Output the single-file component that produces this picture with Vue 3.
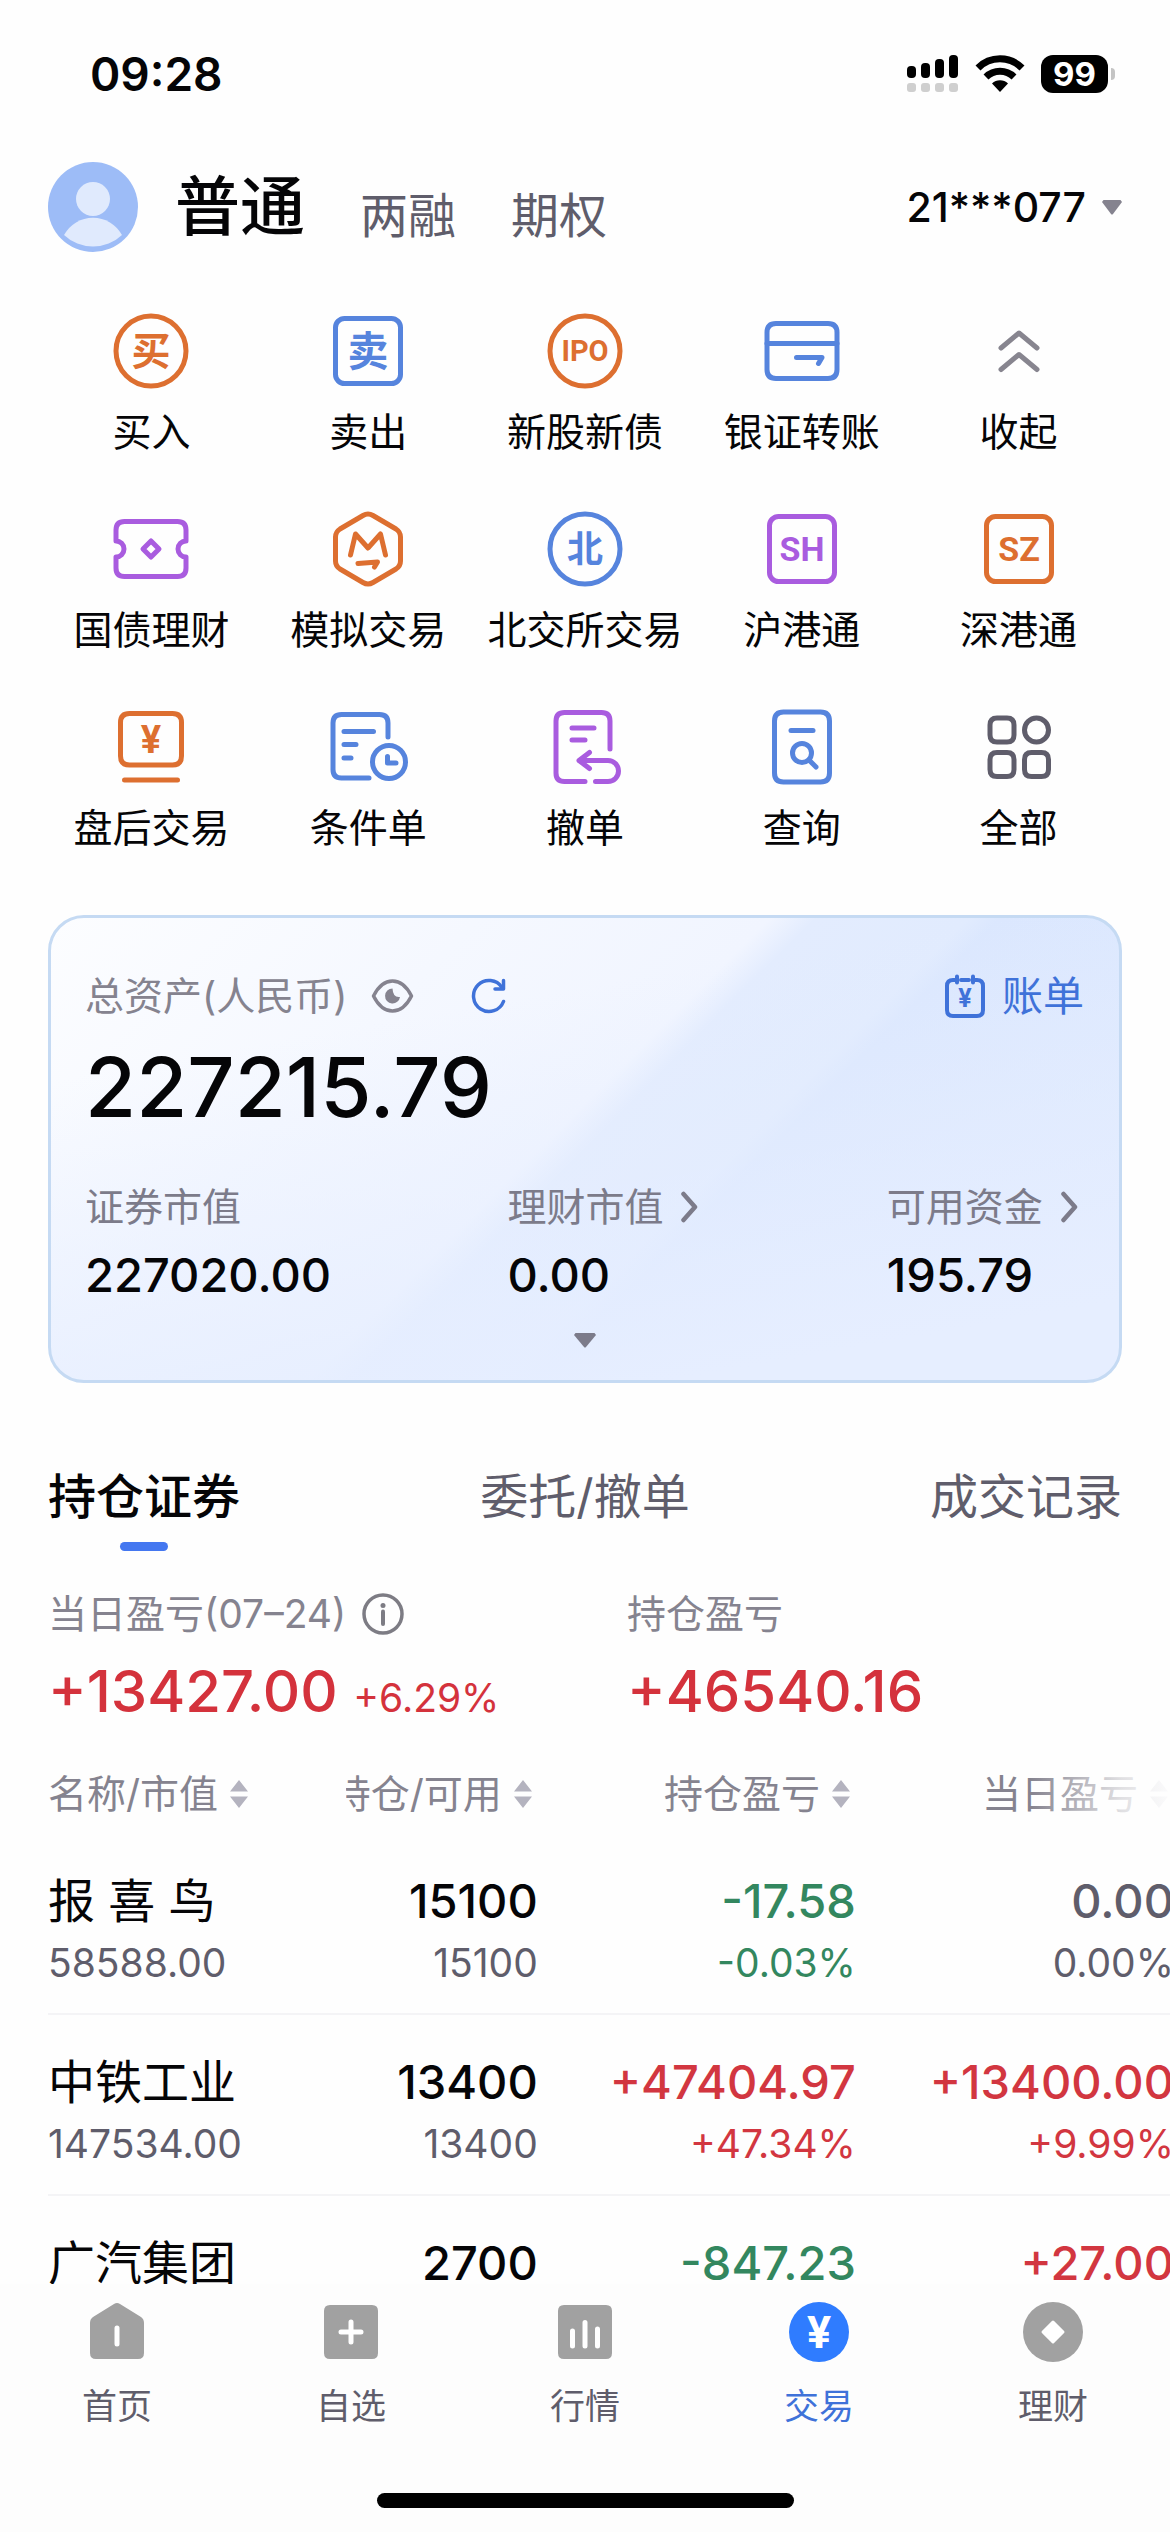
<template>
  <div class="page">
    <div class="status-bar">
      <span class="clock">09:28</span>
      <div class="status-icons">
        <svg width="52" height="38" viewBox="0 0 52 38">
          <g fill="#000">
            <rect x="0" y="11" width="9" height="12" rx="4" />
            <rect x="14" y="8" width="9" height="15" rx="4" />
            <rect x="28" y="4" width="9" height="19" rx="4" />
            <rect x="42" y="0" width="9" height="23" rx="4" />
          </g>
          <g fill="#cfcfcf">
            <rect x="0" y="28" width="9" height="9" rx="3" />
            <rect x="14" y="28" width="9" height="9" rx="3" />
            <rect x="28" y="28" width="9" height="9" rx="3" />
            <rect x="42" y="28" width="9" height="9" rx="3" />
          </g>
        </svg>
        <svg width="50" height="38" viewBox="0 0 50 38">
          <path d="M3 13 a31 31 0 0 1 44 0" fill="none" stroke="#000" stroke-width="7" />
          <path d="M11 22 a20 20 0 0 1 28 0" fill="none" stroke="#000" stroke-width="7" />
          <path d="M25 37 L17 28.500 a11.500 11.500 0 0 1 16 0 Z" fill="#000" />
        </svg>
        <div class="battery">
          <span class="battery-level">99</span>
          <span class="battery-cap"></span>
        </div>
      </div>
    </div>

    <header class="account-bar">
      <svg class="avatar" viewBox="0 0 90 90">
        <circle cx="45" cy="45" r="45" fill="#9dbcf7" />
        <circle cx="45" cy="37" r="17" fill="#e0eafd" />
        <path d="M16 73 a33 33 0 0 1 58 0 a42 42 0 0 1 -58 0 Z" fill="#e0eafd" />
      </svg>
      <nav class="account-tabs">
        <button
          v-for="item in accountTabs"
          :key="item"
          class="account-tab"
          :class="{ active: item === accountTab }"
          @click="accountTab = item"
        >{{ item }}</button>
      </nav>
      <button class="account-picker">
        21***077
        <svg width="20" height="15" viewBox="0 0 20 15"><path d="M1.500 0 H18.500 L20 2 L11 14 Q10 15 9 14 L0 2 Z" fill="#85838f" /></svg>
      </button>
    </header>

    <section class="menu">
      <a v-for="item in menu" :key="item.label" href="#" class="menu-item">
        <svg class="menu-icon" :class="item.color" viewBox="0 0 90 90">
          <circle v-if="item.frame === 'circle'" cx="45" cy="45" r="35" />
          <rect v-if="item.frame === 'square'" x="12.500" y="12.500" width="65" height="65" rx="9" />
          <path v-for="d in item.paths" :key="d" :d="d" />
          <text v-if="item.text" x="45" :y="item.textY" :font-size="item.textSize">{{ item.text }}</text>
        </svg>
        <span>{{ item.label }}</span>
      </a>
    </section>

    <section class="assets">
      <div class="assets-head">
        <span>总资产(人民币)</span>
        <button class="icon-button eye" aria-label="隐藏金额">
          <svg width="43" height="36" viewBox="0 0 43 36">
            <path d="M2.500 18 Q10 3 21.500 3 Q33 3 40.500 18 Q33 33 21.500 33 Q10 33 2.500 18 Z" fill="none" stroke="#85838f" stroke-width="3.500" stroke-linejoin="round" />
            <path d="M21.500 10.500 a7.500 7.500 0 1 0 7.500 8.500 q-7 1 -7.500 -8.500 Z" fill="#85838f" />
          </svg>
        </button>
        <button class="icon-button refresh" aria-label="刷新">
          <svg width="36" height="36" viewBox="0 0 36 36" fill="none" stroke="#3f72d9" stroke-width="3.500" stroke-linecap="round" stroke-linejoin="round">
            <path d="M33.500 23.500 A15.500 15.500 0 1 1 32 9.500" />
            <path d="M33.500 2.500 V11 H25" />
          </svg>
        </button>
        <a href="#" class="bill">
          <svg width="42" height="45" viewBox="0 0 42 45" fill="none" stroke="#3f72d9" stroke-width="4" stroke-linecap="round">
            <path d="M12 6 H9 Q3 6 3 12 V36 Q3 42 9 42 H33 Q39 42 39 36 V12 Q39 6 33 6 H30 M17 6 H25 M13 2.500 V8.500 M29 2.500 V8.500" />
            <text class="yen" x="21" y="33" font-size="25" fill="#3f72d9" stroke="none">¥</text>
          </svg>
          账单
        </a>
      </div>
      <div class="assets-total">227215.79</div>
      <div class="assets-parts">
        <div v-for="part in assetParts" :key="part.label">
          <div class="part-label">
            {{ part.label }}
            <svg v-if="part.link" width="17" height="32" viewBox="0 0 17 32"><path d="M2.500 3 L14 16 L2.500 29" fill="none" stroke="#7c7b8a" stroke-width="4.500" stroke-linecap="round" stroke-linejoin="round" /></svg>
          </div>
          <div class="part-value">{{ part.value }}</div>
        </div>
      </div>
      <button class="icon-button expand" aria-label="展开">
        <svg width="22" height="15" viewBox="0 0 22 15"><path d="M1.500 0 H20.500 L22 2 L12 14 Q11 15 10 14 L0 2 Z" fill="#7c7b8a" /></svg>
      </button>
    </section>

    <nav class="record-tabs">
      <button
        v-for="item in recordTabs"
        :key="item"
        class="record-tab"
        :class="{ active: item === recordTab }"
        @click="recordTab = item"
      >{{ item }}</button>
    </nav>

    <section class="profit">
      <div>
        <div class="profit-label">
          当日盈亏(07–24)
          <svg width="42" height="42" viewBox="0 0 42 42">
            <circle cx="21" cy="21" r="19" fill="none" stroke="#7d7c84" stroke-width="3.500" />
            <circle cx="21" cy="12.500" r="2.500" fill="#7d7c84" />
            <path d="M21 18.500 V31" stroke="#7d7c84" stroke-width="4" stroke-linecap="round" />
          </svg>
        </div>
        <div class="profit-value">+13427.00 <small>+6.29%</small></div>
      </div>
      <div>
        <div class="profit-label">持仓盈亏</div>
        <div class="profit-value">+46540.16</div>
      </div>
    </section>

    <section class="positions">
      <table>
        <colgroup>
          <col class="col-name" />
          <col class="col-hold" />
          <col />
          <col />
        </colgroup>
        <thead>
          <tr>
            <th v-for="col in columns" :key="col">
              <div class="sort">
                {{ col }}
                <svg width="18" height="30" viewBox="0 0 18 30"><path d="M9 1 L18 12.500 H0 Z M9 29 L18 17.500 H0 Z" fill="#b4b3bf" /></svg>
              </div>
            </th>
          </tr>
        </thead>
        <tbody>
          <tr v-for="row in positions" :key="row.name">
            <td>
              <div class="name">{{ row.name }}</div>
              <div class="sub">{{ row.value }}</div>
            </td>
            <td>
              <div class="main">{{ row.hold }}</div>
              <div class="sub">{{ row.usable }}</div>
            </td>
            <td :class="trend(row.profit)">
              <div class="main">{{ row.profit }}</div>
              <div class="sub">{{ row.profitRate }}</div>
            </td>
            <td :class="trend(row.today)">
              <div class="main">{{ row.today }}</div>
              <div class="sub">{{ row.todayRate }}</div>
            </td>
          </tr>
        </tbody>
      </table>
      <div class="fade"></div>
    </section>

    <footer class="tab-bar">
      <nav class="tab-list">
        <a v-for="tab in tabs" :key="tab.label" href="#" class="tab" :class="{ active: tab.active }">
          <svg width="60" height="60" viewBox="0 0 60 60">
            <path :d="tab.shape" fill="currentColor" />
            <path v-if="tab.line" :d="tab.line" fill="none" stroke="#fff" :stroke-width="tab.lineWidth" stroke-linecap="round" />
            <path v-if="tab.hole" :d="tab.hole" fill="#fff" stroke="#fff" stroke-width="3" stroke-linejoin="round" />
            <text v-if="tab.text" class="yen" x="30" y="46" font-size="45" fill="#fff">{{ tab.text }}</text>
          </svg>
          <span>{{ tab.label }}</span>
        </a>
      </nav>
      <div class="home-indicator"></div>
    </footer>
  </div>
</template>

<script setup>
import { ref } from 'vue';

const accountTabs = ['普通', '两融', '期权'];
const accountTab = ref('普通');

const recordTabs = ['持仓证券', '委托/撤单', '成交记录'];
const recordTab = ref('持仓证券');

const menu = [
  { label: '买入', color: 'orange', frame: 'circle', text: '买', textY: 59, textSize: 39 },
  { label: '卖出', color: 'blue', frame: 'square', text: '卖', textY: 60, textSize: 41 },
  { label: '新股新债', color: 'orange', frame: 'circle', text: 'IPO', textY: 55, textSize: 29 },
  {
    label: '银证转账',
    color: 'blue',
    paths: [
      'M19 17.5 H71 Q80 17.5 80 26.500 V63.500 Q80 72.500 71 72.500 H19 Q10 72.500 10 63.500 V26.500 Q10 17.500 19 17.500 Z',
      'M10 37.500 H80',
      'M39.500 51.500 H65 L61.500 57.500'
    ]
  },
  { label: '收起', color: 'gray', paths: ['M27 42 L45 27 L63 42', 'M27 63.500 L45 48.500 L63 63.500'] },
  {
    label: '国债理财',
    color: 'purple',
    paths: [
      'M10 37 V26 Q10 17.500 18.500 17.500 H71.500 Q80 17.500 80 26 V37 A8 8 0 0 0 80 53 V64 Q80 72.500 71.500 72.500 H18.500 Q10 72.500 10 64 V53 A8 8 0 0 0 10 37 Z',
      'M45 37 L53 45 L45 53 L37 45 Z'
    ]
  },
  {
    label: '模拟交易',
    color: 'orange',
    paths: [
      'M40 11.500 Q45 8.500 50 11.500 L73 25 Q77.500 28 77.500 33 V57 Q77.500 62 73 65 L50 78.500 Q45 81.500 40 78.500 L17 65 Q12.500 62 12.500 57 V33 Q12.500 28 17 25 Z',
      'M27.500 51 L32.500 30 L45 44 L57.500 30 L62.500 51',
      'M35 59.500 L54.500 58 L51.500 63'
    ]
  },
  { label: '北交所交易', color: 'blue', frame: 'circle', text: '北', textY: 58, textSize: 36 },
  { label: '沪港通', color: 'purple', frame: 'square', text: 'SH', textY: 57, textSize: 34 },
  { label: '深港通', color: 'orange', frame: 'square', text: 'SZ', textY: 57, textSize: 34 },
  {
    label: '盘后交易',
    color: 'orange',
    text: '¥',
    textY: 51,
    textSize: 38,
    paths: [
      'M23.500 11.500 H66.500 Q75.500 11.500 75.500 20.500 V54 Q75.500 63 66.500 63 H23.500 Q14.500 63 14.500 54 V20.500 Q14.500 11.500 23.500 11.500 Z',
      'M18.500 78 H71.500'
    ]
  },
  {
    label: '条件单',
    color: 'blue',
    paths: [
      'M65 35 V21 Q65 12.500 56.500 12.500 H18.500 Q10 12.500 10 21 V67.500 Q10 76 18.500 76 H46',
      'M21 29.500 H50.500 M21 42.500 H33 M21 56 H28',
      'M82.500 60 a16.500 16.500 0 1 1 -33 0 a16.500 16.500 0 1 1 33 0 Z',
      'M64.500 54.500 V61 H73'
    ]
  },
  {
    label: '撤单',
    color: 'purple',
    paths: [
      'M70 47 V19 Q70 10.500 61.500 10.500 H24.500 Q16 10.500 16 19 V71 Q16 79.500 24.500 79.500 H45',
      'M32 26 H54 M32 38 H45',
      'M49.500 50.500 L39 58.500 L49.500 66.500 M39 58.500 H68 A10.500 10.500 0 0 1 68 79.500 H55.500'
    ]
  },
  {
    label: '查询',
    color: 'blue',
    paths: [
      'M26.500 10 H63.500 Q72.500 10 72.500 19 V71 Q72.500 80 63.500 80 H26.500 Q17.500 80 17.500 71 V19 Q17.500 10 26.500 10 Z',
      'M34 28.500 H56',
      'M54.500 51 a9.500 9.500 0 1 1 -19 0 a9.500 9.500 0 1 1 19 0 Z',
      'M52 58 L59 65'
    ]
  },
  {
    label: '全部',
    color: 'dark',
    paths: [
      'M23 16 H33 Q40 16 40 23 V33 Q40 40 33 40 H23 Q16 40 16 33 V23 Q16 16 23 16 Z',
      'M74.500 28 a12 12 0 1 1 -24 0 a12 12 0 1 1 24 0 Z',
      'M23 50.500 H33 Q40 50.500 40 57.500 V67.500 Q40 74.500 33 74.500 H23 Q16 74.500 16 67.500 V57.500 Q16 50.500 23 50.500 Z',
      'M57.500 50.500 H67.500 Q74.500 50.500 74.500 57.500 V67.500 Q74.500 74.500 67.500 74.500 H57.500 Q50.500 74.500 50.500 67.500 V57.500 Q50.500 50.500 57.500 50.500 Z'
    ]
  }
];

const assetParts = [
  { label: '证券市值', value: '227020.00' },
  { label: '理财市值', value: '0.00', link: true },
  { label: '可用资金', value: '195.79', link: true }
];

const columns = ['名称/市值', '持仓/可用', '持仓盈亏', '当日盈亏'];

const positions = [
  { name: '报 喜 鸟', value: '58588.00', hold: '15100', usable: '15100', profit: '-17.58', profitRate: '-0.03%', today: '0.00', todayRate: '0.00%' },
  { name: '中铁工业', value: '147534.00', hold: '13400', usable: '13400', profit: '+47404.97', profitRate: '+47.34%', today: '+13400.00', todayRate: '+9.99%' },
  { name: '广汽集团', hold: '2700', profit: '-847.23', today: '+27.00' }
];

const square = 'M9 3 H51 Q57 3 57 9 V51 Q57 57 51 57 H9 Q3 57 3 51 V9 Q3 3 9 3 Z';
const round = 'M60 30 a30 30 0 1 1 -60 0 a30 30 0 1 1 60 0 Z';

const tabs = [
  {
    label: '首页',
    shape: 'M27 2 Q30 0 33 2 L54 15 Q57 17 57 21 V51 Q57 57 51 57 H9 Q3 57 3 51 V21 Q3 17 6 15 Z',
    line: 'M30 26 V42',
    lineWidth: 5
  },
  { label: '自选', shape: square, line: 'M30 20 V40 M20 30 H40', lineWidth: 5 },
  { label: '行情', shape: square, line: 'M17.500 29 V44 M30 20.500 V44 M42.500 27 V44', lineWidth: 5 },
  { label: '交易', shape: round, text: '¥', active: true },
  { label: '理财', shape: round, hole: 'M30 20 L40 30 L30 40 L20 30 Z' }
];

const trend = (value) => {
  if (value.startsWith('+')) return 'up';
  if (value.startsWith('-')) return 'down';
  return 'flat';
};
</script>

<style>
body {
  background: #fefefe;
}
</style>

<style scoped>
.page {
  display: flex;
  flex-direction: column;
  height: 100vh;
  overflow: hidden;
  background: #fefefe;
  color: #050507;
  font-family: Inter, "Noto Sans CJK SC", sans-serif;
  font-size: 39px;
  line-height: 48px;
}
button {
  padding: 0;
  border: none;
  background: none;
  color: inherit;
  font: inherit;
  cursor: pointer;
}
a {
  color: inherit;
  text-decoration: none;
}
svg {
  display: block;
  flex: none;
}

/* status bar */
.status-bar {
  display: flex;
  flex: none;
  justify-content: space-between;
  align-items: center;
  height: 148px;
  padding: 0 55px 0 90px;
}
.clock {
  font-size: 46px;
  font-weight: 600;
}
.status-icons {
  display: flex;
  align-items: center;
  gap: 16px;
}
.battery {
  display: flex;
  align-items: center;
  gap: 3px;
}
.battery-level {
  width: 67px;
  border-radius: 12px;
  background: #000;
  color: #fff;
  font-size: 33px;
  font-weight: 700;
  line-height: 38px;
  text-align: center;
}
.battery-cap {
  width: 4px;
  height: 12px;
  border-radius: 0 4px 4px 0;
  background: #c4c4c4;
}

/* account */
.account-bar {
  display: flex;
  flex: none;
  align-items: center;
  padding: 14px 48px 0;
}
.avatar {
  width: 90px;
  height: 90px;
  margin-right: 37px;
}
.account-tabs {
  display: flex;
  flex: 1;
  align-items: flex-end;
  gap: 55px;
}
.account-tab {
  color: #5f5d6b;
  font-size: 48px;
  line-height: 54px;
}
.account-tab.active {
  color: #050507;
  font-size: 65px;
  font-weight: 500;
  line-height: 72px;
}
.account-picker {
  display: flex;
  align-items: center;
  gap: 16px;
  font-size: 41px;
  font-weight: 500;
}

/* menu */
.menu {
  display: grid;
  flex: none;
  grid-template-columns: repeat(5, 1fr);
  row-gap: 48px;
  padding: 54px 43px 0;
}
.menu-item {
  display: flex;
  flex-direction: column;
  align-items: center;
  gap: 12px;
  white-space: nowrap;
}
.menu-icon {
  width: 90px;
  height: 90px;
  fill: none;
  stroke: currentColor;
  stroke-width: 5;
  stroke-linecap: round;
  stroke-linejoin: round;
}
.menu-icon text {
  fill: currentColor;
  stroke: none;
  font-family: Roboto, "Noto Sans CJK SC", sans-serif;
  font-weight: 700;
  text-anchor: middle;
}
.orange {
  color: #dd6f30;
}
.blue {
  color: #5684dd;
}
.purple {
  color: #a95cdf;
}
.gray {
  color: #87858f;
}
.dark {
  color: #5f5d6b;
}
.yen {
  font-family: Roboto, sans-serif;
  font-weight: 700;
  text-anchor: middle;
}

/* assets card */
.assets {
  display: flex;
  flex: none;
  flex-direction: column;
  margin: 63px 48px 0;
  padding: 54px 35px 32px 34px;
  border: 3px solid #c5daf3;
  border-radius: 36px;
  background:
    linear-gradient(350deg, #e6eeff 12%, rgba(230, 238, 255, 0) 75%),
    linear-gradient(135deg, #fcfdff 0%, #f5f8ff 28%, #f1f5ff 47%, #e3ecfe 50%, #e1ebfe 60%, #dbe7fe 62%, #dfeaff 100%);
}
.assets-head {
  display: flex;
  align-items: center;
  color: #85838f;
}
.icon-button {
  display: flex;
}
.eye {
  margin-left: 24px;
}
.refresh {
  margin-left: 56px;
}
.bill {
  display: flex;
  align-items: center;
  gap: 16px;
  margin-left: auto;
  color: #3f72d9;
  font-size: 41px;
}
.assets-total {
  margin-top: 19px;
  font-size: 83px;
  font-weight: 500;
  line-height: 96px;
}
.assets-parts {
  display: grid;
  grid-template-columns: 422fr 379fr 197fr;
  margin-top: 48px;
}
.part-label {
  display: flex;
  align-items: center;
  gap: 18px;
  color: #7c7b8a;
  white-space: nowrap;
}
.part-value {
  margin-top: 16px;
  font-size: 47px;
  font-weight: 500;
  line-height: 56px;
}
.expand {
  align-self: center;
  margin-top: 30px;
}

/* records */
.record-tabs {
  display: flex;
  flex: none;
  justify-content: space-between;
  margin: 82px 48px 0;
}
.record-tab {
  display: flex;
  flex-direction: column;
  align-items: center;
  gap: 13px;
  color: #5f5d6b;
  font-size: 48px;
  line-height: 64px;
}
.record-tab::after {
  width: 48px;
  height: 9px;
  border-radius: 5px;
  content: "";
}
.record-tab.active {
  color: #050507;
  font-weight: 500;
}
.record-tab.active::after {
  background: #4477f0;
}
.profit {
  display: grid;
  flex: none;
  grid-template-columns: 579fr 495fr;
  margin: 39px 48px 0;
}
.profit-label {
  display: flex;
  align-items: center;
  gap: 16px;
  color: #85838f;
}
.profit-value {
  margin-top: 21px;
  color: #d4323c;
  font-size: 58px;
  font-weight: 500;
  line-height: 64px;
}
.profit-value small {
  font-size: 39px;
  font-weight: 400;
  line-height: 39px;
}

/* positions */
.positions {
  position: relative;
  flex: 1;
  min-height: 0;
  margin: 31px 0 0 48px;
  overflow: hidden;
}
table {
  width: calc(100% + 4px);
  border-collapse: collapse;
  table-layout: fixed;
}
.col-name {
  width: 26.5%;
}
.col-hold {
  width: 17%;
}
th,
td {
  padding: 0;
  text-align: right;
}
th {
  height: 80px;
  overflow: hidden;
  color: #85838f;
  font-weight: 400;
}
th:first-child,
td:first-child {
  text-align: left;
}
.sort {
  display: flex;
  justify-content: flex-end;
  align-items: center;
  gap: 12px;
  padding-right: 6px;
  overflow: hidden;
  white-space: nowrap;
}
th:first-child .sort {
  justify-content: flex-start;
}
td {
  height: 144px;
  padding-top: 35px;
  border-bottom: 2px solid #f4f4f6;
  vertical-align: top;
}
.name,
.main {
  font-size: 47px;
  line-height: 64px;
}
.main {
  font-weight: 500;
}
.sub {
  margin-top: 6px;
  color: #5f5d6b;
}
.up .main,
.up .sub {
  color: #d23640;
}
.down .main,
.down .sub {
  color: #33875f;
}
.flat .main {
  color: #5f5d6b;
}
.fade {
  position: absolute;
  top: 0;
  right: 0;
  width: 140px;
  height: 80px;
  background: linear-gradient(to right, rgba(254, 254, 254, 0), rgba(254, 254, 254, 0.75) 65%, rgba(254, 254, 254, 0.95));
}

/* bottom tabs */
.tab-bar {
  flex: none;
  padding-bottom: 24px;
  background: #fdfdfd;
}
.tab-list {
  display: grid;
  grid-template-columns: repeat(5, 1fr);
  padding-top: 18px;
}
.tab {
  display: flex;
  flex-direction: column;
  align-items: center;
  gap: 20px;
  color: #a1a1a1;
  font-size: 35px;
}
.tab span {
  color: #5f5d6b;
}
.tab.active {
  color: #2f7cff;
}
.tab.active span {
  color: #3f72d9;
}
.home-indicator {
  width: 417px;
  height: 15px;
  margin: 63px auto 0;
  border-radius: 8px;
  background: #000;
}
</style>
